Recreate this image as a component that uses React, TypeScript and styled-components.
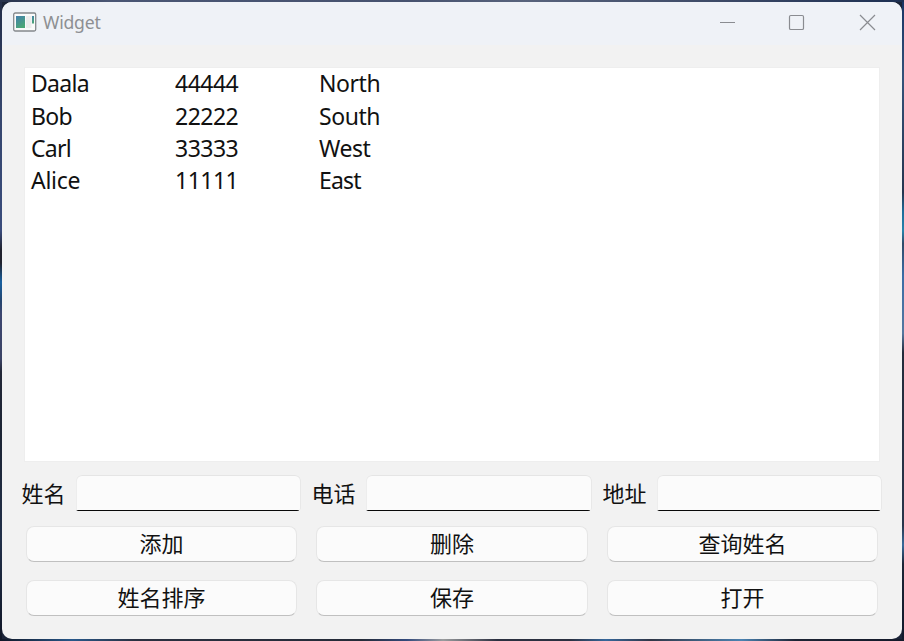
import React from "react";
import styled, { createGlobalStyle } from "styled-components";

const GlobalStyle = createGlobalStyle`
  * { box-sizing: border-box; }
  body { margin: 0; overflow: hidden; }
`;

const Desktop = styled.div`
  width: 904px;
  height: 641px;
  padding: 2px;
  background:
    linear-gradient(90deg, #27324c 0%, #4a5674 12%, #46526f 45%, #58637c 58%, #3c4966 80%, #1c2f52 100%) 0 0 / 100% 2px no-repeat,
    linear-gradient(90deg, #101626 0%, #28588a 8%, #2a3040 15%, #252b38 40%, #334a7c 45%, #9a9c9e 49%, #2b3040 55%, #2b3040 63%, #36679b 67%, #303646 72%, #4b83b2 82%, #1d2434 88%, #141a2a 100%) 0 100% / 100% 2px no-repeat,
    linear-gradient(180deg, #232d48 0%, #35466d 17%, #3a4c7c 36%, #20222e 39%, #20222e 41%, #1860a0 44%, #25456f 47%, #3d4670 49%, #3c4466 56%, #232838 58%, #1c2434 68%, #22304a 84%, #101626 100%) 0 0 / 2px 100% no-repeat,
    linear-gradient(180deg, #183464 0%, #34527a 12%, #26354f 30%, #1e6c9a 33%, #2684ac 36%, #304a68 38%, #3b6da6 43%, #55779f 52%, #242b3b 55%, #29354b 82%, #396a9b 85%, #1c2536 88%, #11182b 100%) 100% 0 / 2px 100% no-repeat,
    #1b2438;
`;

const Window = styled.main`
  display: flex;
  flex-direction: column;
  width: 900px;
  height: 637px;
  overflow: hidden;
  border-radius: 10px;
  background: #f2f2f2;
  color: #111;
  font-family: "Noto Sans", "Noto Sans CJK SC", sans-serif;
`;

const TitleBar = styled.header`
  display: flex;
  align-items: center;
  flex: none;
  height: 43px;
  padding: 0 23px 3px 11px;
  background: #eff2f7;
`;

const Title = styled.span`
  flex: 1;
  margin: 0 0 1px 6px;
  color: #8d8f92;
  font-size: 17.6px;
  letter-spacing: -0.2px;
  line-height: 24px;
`;

const Controls = styled.div`
  display: flex;
  gap: 46px;
`;

const ControlButton = styled.button`
  display: flex;
  width: 24px;
  height: 24px;
  padding: 0;
  border: 0;
  background: none;
  color: #8a8c91;
`;

const List = styled.section`
  flex: none;
  width: 854px;
  height: 393px;
  margin: 23px 0 0 23px;
  padding: 0.3px 6px 0;
  background: #fff;
  box-shadow: 0 0 0 1px #eeeeee;
`;

const Row = styled.div`
  display: grid;
  grid-template-columns: 144px 144px 1fr;
  height: 32.3px;
  font-size: 23px;
  line-height: 31px;
`;

const Cell = styled.span<{ $spacing: number }>`
  letter-spacing: ${({ $spacing }) => $spacing}px;
`;

const Form = styled.div`
  display: grid;
  grid-template-columns: 279px 280px 279px;
  column-gap: 11px;
  margin: 14px 0 0 20px;
`;

const Field = styled.label`
  display: flex;
  align-items: center;
  height: 36px;
  font-size: 22px;
`;

const FieldName = styled.span`
  flex: none;
  width: 54.5px;
  margin-left: -0.5px;
  line-height: 36px;
  padding-bottom: 1px;
`;

const Input = styled.input`
  flex: 1;
  min-width: 0;
  height: 36px;
  padding: 0 8px;
  border: 0;
  outline: 0;
  border-radius: 6px 6px 3px 1px;
  font: inherit;
  background:
    linear-gradient(#080808, #080808) 0 100% / calc(100% - 2px) 1.5px no-repeat,
    #fbfbfb;
  box-shadow: inset 0 1px #e5e5e5, inset -1px 0 #e8e8e8, inset 1px 0 #ededed;
`;

const Button = styled.button`
  height: 36px;
  margin: 15px 4px 0;
  padding: 0 0 3px;
  border: 1px solid #e6e6e6;
  border-bottom-color: #c0c0c0;
  border-radius: 8px;
  background: #fbfbfb;
  color: #111;
  font: 22px/31px "Noto Sans CJK SC", sans-serif;
`;

const LowerButton = styled(Button)`
  margin-top: 18px;
`;

const contacts = [
  ["Daala", "44444", "North"],
  ["Bob", "22222", "South"],
  ["Carl", "33333", "West"],
  ["Alice", "11111", "East"],
];

const AppIcon = () => (
  <svg width="24" height="20" viewBox="0 0 24 20">
    <defs>
      <linearGradient id="pane" x1="0" y1="0" x2="0.5" y2="1">
        <stop offset="0" stopColor="#437fae" />
        <stop offset="1" stopColor="#4ba676" />
      </linearGradient>
    </defs>
    <rect x=".7" y="1" width="22" height="18" rx="1.5" fill="#fafafa" stroke="#84888c" strokeWidth="1.3" />
    <rect x="3" y="4" width="9" height="12" fill="url(#pane)" />
    <rect x="13" y="4" width="5.5" height="12" fill="#ececec" />
    <rect x="19" y="4" width="2" height="7.5" fill="url(#pane)" />
  </svg>
);

const Glyph = ({ d }: { d: string }) => (
  <svg width="24" height="24" viewBox="0 0 24 24" fill="none" stroke="currentColor" strokeWidth="1.2">
    <path d={d} />
  </svg>
);

export default function App() {
  return (
    <Desktop>
      <GlobalStyle />
      <Window>
        <TitleBar>
          <AppIcon />
          <Title>Widget</Title>
          <Controls>
            <ControlButton aria-label="Minimize"><Glyph d="M5 12.5h15" /></ControlButton>
            <ControlButton aria-label="Maximize">
              <Glyph d="M5.8 5.5h11.4q1.3 0 1.3 1.3v11.4q0 1.3-1.3 1.3H5.8q-1.3 0-1.3-1.3V6.8q0-1.3 1.3-1.3Z" />
            </ControlButton>
            <ControlButton aria-label="Close"><Glyph d="M5 5l15 15M20 5 5 20" /></ControlButton>
          </Controls>
        </TitleBar>
        <List>
          {contacts.map(([name, phone, address]) => (
            <Row key={name}>
              <Cell $spacing={name === "Alice" ? -0.3 : -0.7}>{name}</Cell>
              <Cell $spacing={-0.5}>{phone}</Cell>
              <Cell $spacing={address === "East" ? -0.8 : -0.45}>{address}</Cell>
            </Row>
          ))}
        </List>
        <Form>
          {["姓名", "电话", "地址"].map((name) => (
            <Field key={name}>
              <FieldName>{name}</FieldName>
              <Input />
            </Field>
          ))}
          {["添加", "删除", "查询姓名"].map((name) => (
            <Button key={name}>{name}</Button>
          ))}
          {["姓名排序", "保存", "打开"].map((name) => (
            <LowerButton key={name}>{name}</LowerButton>
          ))}
        </Form>
      </Window>
    </Desktop>
  );
}
